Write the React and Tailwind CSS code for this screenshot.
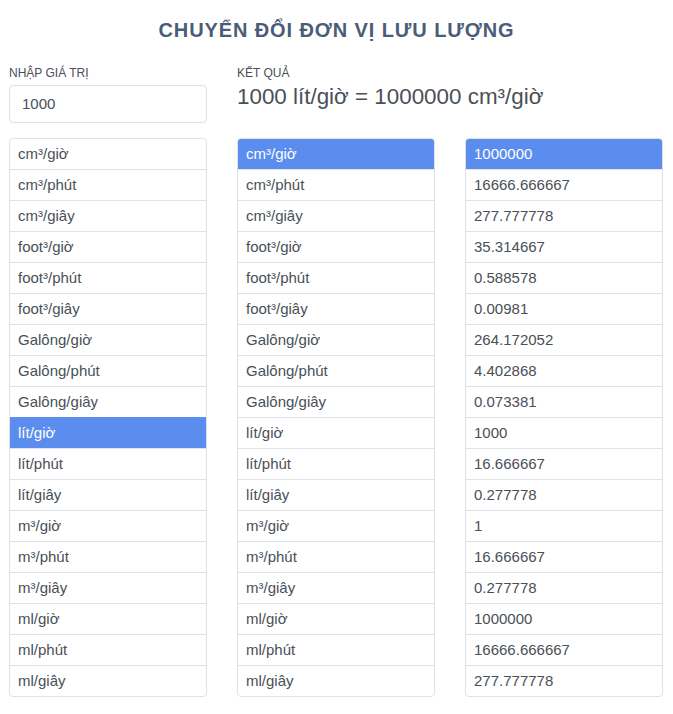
import React from "react";

const units = [
  "cm³/giờ","cm³/phút","cm³/giây","foot³/giờ","foot³/phút","foot³/giây",
  "Galông/giờ","Galông/phút","Galông/giây","lít/giờ","lít/phút","lít/giây",
  "m³/giờ","m³/phút","m³/giây","ml/giờ","ml/phút","ml/giây",
];
const values = [
  "1000000","16666.666667","277.777778","35.314667","0.588578","0.00981",
  "264.172052","4.402868","0.073381","1000","16.666667","0.277778",
  "1","16.666667","0.277778","1000000","16666.666667","277.777778",
];

function List({ items, active }) {
  return (
    <div className="w-[198px] border border-[#dfe2e6] rounded-[4px] overflow-hidden bg-white">
      {items.map((t, i) => (
        <div
          key={i}
          className={
            "flex items-center pl-[8px] text-[15px] " +
            (i > 0 ? "h-[31px] border-t " : "h-[30px] ") +
            (i === active
              ? "bg-[#5a8dee] text-white border-[#5a8dee]"
              : "text-[#495057] border-[#dfe2e6]")
          }
        >
          {t}
        </div>
      ))}
    </div>
  );
}

export default function App() {
  return (
    <div
      className="w-[673px] min-h-[714px] bg-white px-[9px]"
      style={{ fontFamily: '"Liberation Sans", Arial, sans-serif' }}
    >
      <h1 className="pt-[18px] h-[42px] leading-[24px] text-center text-[20px] font-bold tracking-[0.9px] text-[#4a5d78]">
        CHUYỂN ĐỔI ĐƠN VỊ LƯU LƯỢNG
      </h1>
      <div className="mt-[23px] flex gap-[30px]">
        <div className="w-[198px]">
          <div className="text-[12px] leading-[16px] text-[#495057]">NHẬP GIÁ TRỊ</div>
          <div className="mt-[4px] h-[38px] border border-[#dfe2e6] rounded-[4px] flex items-center pl-[12px] text-[15px] text-[#495057]">
            1000
          </div>
        </div>
        <div className="w-[426px]">
          <div className="text-[12px] leading-[16px] text-[#495057]">KẾT QUẢ</div>
          <div className="mt-[3px] text-[22.4px] leading-[26px] text-[#495057]">
            1000 lít/giờ = 1000000 cm³/giờ
          </div>
        </div>
      </div>
      <div className="mt-[15px] flex gap-[30px]">
        <List items={units} active={9} />
        <List items={units} active={0} />
        <List items={values} active={0} />
      </div>
    </div>
  );
}
